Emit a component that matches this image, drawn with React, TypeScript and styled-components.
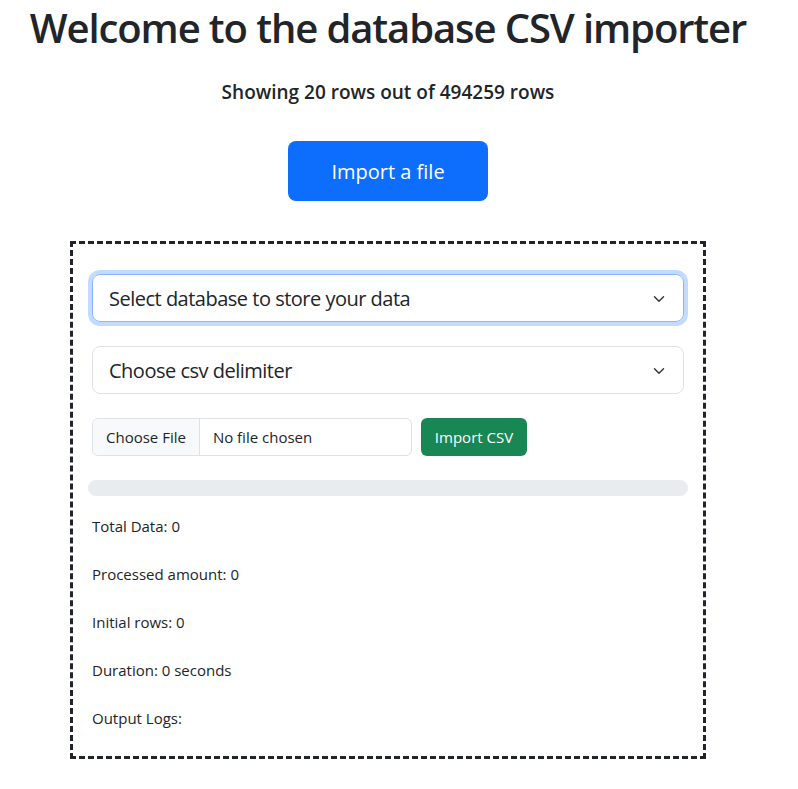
import React from "react";
import styled, { createGlobalStyle } from "styled-components";

const Global = createGlobalStyle`
  * { box-sizing: border-box; }
  body {
    margin: 0;
    background: #fff;
    color: #212529;
    font-family: "Open Sans", "Noto Sans", sans-serif;
    font-size: 16px;
    line-height: 1.5;
  }
`;

const Page = styled.main`
  width: 776px;
  display: flex;
  flex-direction: column;
  align-items: center;
`;

const Title = styled.h1`
  margin: 4px 0 0;
  font-size: 40px;
  font-weight: 600;
  line-height: 48px;
  letter-spacing: -1.1px;
`;

const Subtitle = styled.h2`
  margin: 27px 0 0;
  font-size: 19px;
  font-weight: 600;
  line-height: 27px;
`;

const PrimaryButton = styled.button`
  margin-top: 35px;
  width: 200px;
  height: 60px;
  border: none;
  border-radius: 8px;
  background: #0d6efd;
  color: #fff;
  font-family: inherit;
  font-size: 20px;
  cursor: pointer;
`;

const ImportBox = styled.section`
  margin-top: 40px;
  width: 636px;
  border: 3px dashed #212529;
  padding: 30px 15px 2px;
  display: flex;
  flex-direction: column;
`;

const Select = styled.div<{ $focused?: boolean }>`
  margin: 0 4px 24px;
  height: 48px;
  display: flex;
  align-items: center;
  justify-content: space-between;
  padding: 1px 16px 0;
  border: 1px solid ${(p) => (p.$focused ? "#86b7fe" : "#dee2e6")};
  border-radius: 8px;
  font-size: 20px;
  letter-spacing: -0.5px;
  box-shadow: ${(p) => (p.$focused ? "0 0 0 4px rgba(13,110,253,.25)" : "none")};
`;

const Chevron = () => (
  <svg width="16" height="12" viewBox="0 0 16 16" fill="none">
    <path d="m2 5 6 6 6-6" stroke="#343a40" strokeWidth="2" strokeLinecap="round" strokeLinejoin="round" />
  </svg>
);

const FileRow = styled.div`
  margin: 0 4px 24px;
  display: flex;
  gap: 9px;
  height: 38px;
`;

const FileInput = styled.div`
  width: 320px;
  display: flex;
  border: 1px solid #dee2e6;
  border-radius: 6px;
  overflow: hidden;
  font-size: 15px;
`;

const FileButton = styled.span`
  display: flex;
  align-items: center;
  padding: 0 13px;
  background: #f8f9fa;
  border-right: 1px solid #dee2e6;
`;

const FileName = styled.span`
  display: flex;
  align-items: center;
  padding: 0 13px;
`;

const SuccessButton = styled.button`
  width: 106px;
  border: none;
  border-radius: 6px;
  background: #198754;
  color: #fff;
  font-family: inherit;
  font-size: 15px;
`;

const Progress = styled.div`
  height: 16px;
  border-radius: 8px;
  background: #e9ecef;
  margin-bottom: 18px;
`;

const Stat = styled.p`
  margin: 0 4px 24px;
  font-size: 15px;
  line-height: 24px;
`;

export default function App() {
  return (
    <>
      <Global />
      <Page>
        <Title>Welcome to the database CSV importer</Title>
        <Subtitle>Showing 20 rows out of 494259 rows</Subtitle>
        <PrimaryButton>Import a file</PrimaryButton>
        <ImportBox>
          <Select $focused>
            <span>Select database to store your data</span>
            <Chevron />
          </Select>
          <Select>
            <span>Choose csv delimiter</span>
            <Chevron />
          </Select>
          <FileRow>
            <FileInput>
              <FileButton>Choose File</FileButton>
              <FileName>No file chosen</FileName>
            </FileInput>
            <SuccessButton>Import CSV</SuccessButton>
          </FileRow>
          <Progress />
          <Stat>Total Data: 0</Stat>
          <Stat>Processed amount: 0</Stat>
          <Stat>Initial rows: 0</Stat>
          <Stat>Duration: 0 seconds</Stat>
          <Stat>Output Logs:</Stat>
        </ImportBox>
      </Page>
    </>
  );
}
